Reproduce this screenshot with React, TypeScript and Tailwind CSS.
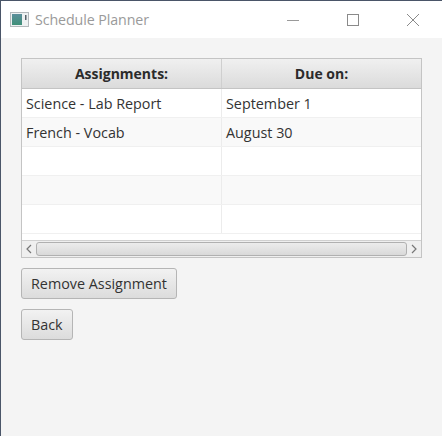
import React from "react";

const rows = [
  ["Science - Lab Report", "September 1"],
  ["French - Vocab", "August 30"],
  ["", ""],
  ["", ""],
  ["", ""],
];

function Btn({ label }: { label: string }) {
  return (
    <button className="h-[31px] pt-[1px] px-[9px] w-fit rounded-[3px] border border-[#b5b5b5] bg-gradient-to-b from-[#f2f2f2] to-[#dcdcdc] text-[14.35px] leading-none text-[#333333]">
      {label}
    </button>
  );
}

export default function App() {
  return (
    <div className="w-[442px] h-[436px] flex flex-col bg-[#f4f4f4] border-l border-t border-[#4a5568] font-['Open_Sans','Noto_Sans',sans-serif] overflow-hidden">
      <div className="h-[37px] shrink-0 bg-white flex items-center">
        <svg width="20" height="16" viewBox="0 0 20 16" className="ml-[9px] mr-[5px] shrink-0">
          <defs>
            <linearGradient id="ic" x1="0" y1="0" x2="0" y2="1">
              <stop offset="0" stopColor="#5c8f9c" />
              <stop offset="1" stopColor="#3f9078" />
            </linearGradient>
          </defs>
          <rect x="0.5" y="0.5" width="18" height="14" fill="#eef1f2" stroke="#b4b9bc" />
          <rect x="2" y="2" width="10" height="11" fill="url(#ic)" />
          <rect x="15" y="3" width="1.5" height="5" fill="#59626a" />
        </svg>
        <span className="text-[14.25px] text-[#9a9a9a] tracking-[-0.1px]">Schedule Planner</span>
        <div className="ml-auto flex items-center">
          <svg width="14" height="14" viewBox="0 0 14 14" className="mr-[46px]">
            <path d="M1 7.5H13" stroke="#9a9a9a" />
          </svg>
          <svg width="14" height="14" viewBox="0 0 14 14" className="mr-[46px]">
            <rect x="1.5" y="1.5" width="11" height="11" fill="none" stroke="#8a8a8a" />
          </svg>
          <svg width="14" height="14" viewBox="0 0 14 14" className="mr-[22px]">
            <path d="M1 1L13 13M13 1L1 13" stroke="#8a8a8a" />
          </svg>
        </div>
      </div>

      <div className="flex flex-col pl-[20px] pt-[20px]">
        <div className="w-[401px] h-[200px] border border-[#c4c4c4] bg-white flex flex-col">
          <div className="flex h-[30px] shrink-0 border-b border-[#c4c4c4] bg-gradient-to-b from-[#f0f0f0] to-[#dbdbdb] text-[14px] font-bold text-[#2b2b2b]">
            <div className="w-[200px] flex items-center justify-center border-r border-[#cfcfcf]">Assignments:</div>
            <div className="flex-1 flex items-center justify-center">Due on:</div>
          </div>
          <div className="flex-1 overflow-hidden">
            {rows.map((r, i) => (
              <div key={i} className={`flex h-[29px] border-b border-[#f0f0f0] text-[14.35px] text-[#333333] ${i % 2 ? "bg-[#f9f9f9]" : "bg-white"}`}>
                <div className="w-[200px] pl-[4px] pt-[1px] flex items-center border-r border-[#ececec]">{r[0]}</div>
                <div className="flex-1 pl-[4px] pt-[1px] flex items-center">{r[1]}</div>
              </div>
            ))}
          </div>
          <div className="h-[17px] shrink-0 flex items-center bg-[#efefef] border-t border-[#d0d0d0]">
            <svg width="14" height="14" viewBox="0 0 14 14" className="shrink-0">
              <path d="M9 3L5 7L9 11" fill="none" stroke="#777777" strokeWidth="1.2" />
            </svg>
            <div className="h-[14px] w-[371px] rounded-[3px] border border-[#b0b0b0] bg-gradient-to-b from-[#ececec] to-[#d9d9d9]" />
            <svg width="14" height="14" viewBox="0 0 14 14" className="shrink-0 ml-auto">
              <path d="M5 3L9 7L5 11" fill="none" stroke="#777777" strokeWidth="1.2" />
            </svg>
          </div>
        </div>
        <div className="mt-[10px] flex flex-col gap-[10px]">
          <Btn label="Remove Assignment" />
          <Btn label="Back" />
        </div>
      </div>
    </div>
  );
}
